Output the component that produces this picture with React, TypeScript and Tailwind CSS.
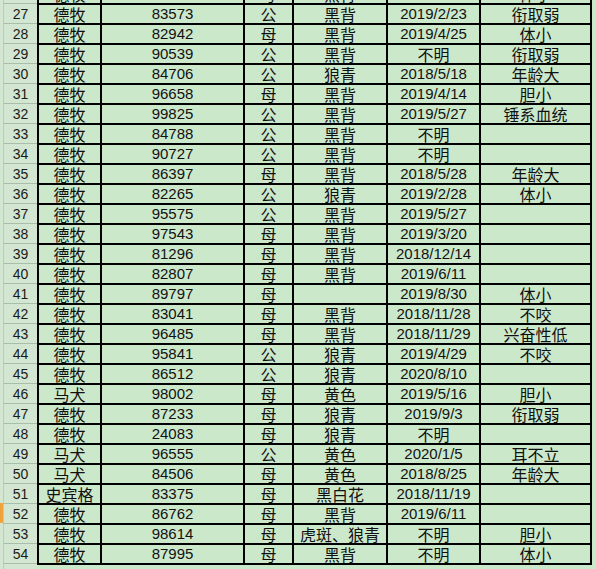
import React from "react";

type Dog = [number, string, string, string, string, string, string];

const dogs: Dog[] = [
  [26, "德牧", "85120", "母", "黑背", "2019/3/12", "体小"],
  [27, "德牧", "83573", "公", "黑背", "2019/2/23", "衔取弱"],
  [28, "德牧", "82942", "母", "黑背", "2019/4/25", "体小"],
  [29, "德牧", "90539", "公", "黑背", "不明", "衔取弱"],
  [30, "德牧", "84706", "公", "狼青", "2018/5/18", "年龄大"],
  [31, "德牧", "96658", "母", "黑背", "2019/4/14", "胆小"],
  [32, "德牧", "99825", "公", "黑背", "2019/5/27", "锤系血统"],
  [33, "德牧", "84788", "公", "黑背", "不明", ""],
  [34, "德牧", "90727", "公", "黑背", "不明", ""],
  [35, "德牧", "86397", "母", "黑背", "2018/5/28", "年龄大"],
  [36, "德牧", "82265", "公", "狼青", "2019/2/28", "体小"],
  [37, "德牧", "95575", "公", "黑背", "2019/5/27", ""],
  [38, "德牧", "97543", "母", "黑背", "2019/3/20", ""],
  [39, "德牧", "81296", "母", "黑背", "2018/12/14", ""],
  [40, "德牧", "82807", "母", "黑背", "2019/6/11", ""],
  [41, "德牧", "89797", "母", "", "2019/8/30", "体小"],
  [42, "德牧", "83041", "母", "黑背", "2018/11/28", "不咬"],
  [43, "德牧", "96485", "母", "黑背", "2018/11/29", "兴奋性低"],
  [44, "德牧", "95841", "公", "狼青", "2019/4/29", "不咬"],
  [45, "德牧", "86512", "公", "狼青", "2020/8/10", ""],
  [46, "马犬", "98002", "母", "黄色", "2019/5/16", "胆小"],
  [47, "德牧", "87233", "母", "狼青", "2019/9/3", "衔取弱"],
  [48, "德牧", "24083", "母", "狼青", "不明", ""],
  [49, "马犬", "96555", "公", "黄色", "2020/1/5", "耳不立"],
  [50, "马犬", "84506", "母", "黄色", "2018/8/25", "年龄大"],
  [51, "史宾格", "83375", "母", "黑白花", "2018/11/19", ""],
  [52, "德牧", "86762", "母", "黑背", "2019/6/11", ""],
  [53, "德牧", "98614", "母", "虎斑、狼青", "不明", "胆小"],
  [54, "德牧", "87995", "母", "黑背", "不明", "体小"],
];

const cjk = "font-['Noto_Sans_CJK_SC',sans-serif] text-[16px]";
const latin = "font-['Liberation_Sans','Noto_Sans_CJK_SC',sans-serif] text-[15px]";

// date column mixes digits and 不明
function fontFor(text: string) {
  return /^[0-9/]+$/.test(text) ? latin : cjk;
}

function Cell({ width, text, last }: { width: string; text: string; last?: boolean }) {
  return (
    <div
      className={`${width} flex h-full items-center justify-center overflow-visible whitespace-nowrap border-l-2 border-t-2 border-black leading-[18px] text-[#111] ${fontFor(text)} ${last ? "border-r-2" : ""}`}
    >
      {text}
    </div>
  );
}

function RowHeader({ n, active }: { n?: number; active?: boolean }) {
  return (
    <div className="flex h-full w-[37px] shrink-0">
      <div className={`h-full w-[3px] ${active ? "bg-[#f0a33c]" : "bg-[#d3e6d1]"}`} />
      <div className="flex h-full flex-1 items-center justify-center border-l border-t border-l-[#b8c9d4] border-t-[#a9bea9] bg-[#d3e6d1] font-['Liberation_Sans',sans-serif] text-[14px] leading-[18px] text-[#1a1a1a]">
        {n}
      </div>
    </div>
  );
}

export default function App() {
  return (
    <div className="h-[569px] w-[596px] overflow-hidden bg-[#cce8cb]">
      <div className="-mt-[17px] flex flex-col">
        {dogs.map(([n, breed, id, sex, color, date, note]) => (
          <div key={n} className="flex h-[20px]">
            <RowHeader n={n} active={n === 52} />
            <Cell width="w-[63px]" text={breed} />
            <Cell width="w-[143px]" text={id} />
            <Cell width="w-[49px]" text={sex} />
            <Cell width="w-[94px]" text={color} />
            <Cell width="w-[93px]" text={date} />
            <Cell width="w-[113px]" text={note} last />
          </div>
        ))}
        {/* closing line under the last row */}
        <div className="flex h-[20px]">
          <RowHeader />
          <div className="h-full w-[555px] border-t-2 border-black" />
        </div>
      </div>
    </div>
  );
}
